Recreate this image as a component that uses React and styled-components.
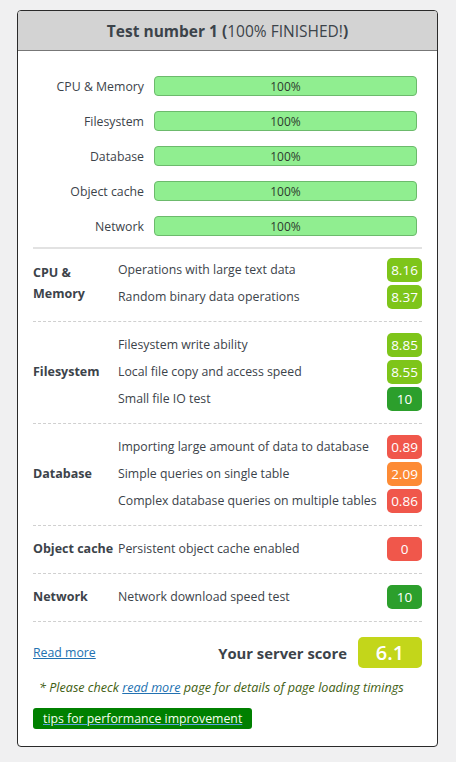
import styled, { createGlobalStyle } from "styled-components";

const GlobalStyle = createGlobalStyle`
  body {
    margin: 0;
    background: #f0f0f1;
    font-family: "Open Sans", "Noto Sans", sans-serif;
    color: #3c434a;
  }
`;

const Page = styled.div`
  padding: 10px 18px 15px 17px;
`;

const Card = styled.div`
  background: #fff;
  border: 1px solid #2a2a2a;
  border-radius: 4px;
  overflow: hidden;
`;

const Header = styled.div`
  background: #d3d3d3;
  border-bottom: 1px solid #777;
  height: 39px;
  display: flex;
  align-items: center;
  justify-content: center;
  font-size: 15.5px;
  font-weight: 700;
  color: #3c434a;

  & span {
    font-weight: 400;
  }
`;

const Body = styled.div`
  padding: 0 15px 17px;
`;

const Progress = styled.div`
  display: flex;
  flex-direction: column;
  gap: 15px;
  padding: 25px 5px 11px 0;
  border-bottom: 2px solid #e2e2e2;
`;

const ProgressRow = styled.div`
  display: grid;
  grid-template-columns: 111px 1fr;
  column-gap: 10px;
  align-items: center;
  font-size: 12.3px;
`;

const ProgressLabel = styled.div`
  text-align: right;
`;

const Bar = styled.div`
  height: 18px;
  background: #90ee90;
  border: 1px solid #6cba6c;
  border-radius: 4px;
  display: flex;
  align-items: center;
  justify-content: center;
  font-size: 12px;
  color: #2e3a2e;
`;

const Section = styled.div`
  display: grid;
  grid-template-columns: 85px 1fr;
  align-items: center;
  padding: ${(p) => (p.first ? "7px 0 11px" : "9px 0 11px")};
  border-bottom: 1px dashed #d0d0d0;
`;

const Category = styled.div`
  font-weight: 700;
  font-size: 12.5px;
  line-height: 21px;
  color: #3c434a;
`;

const Tests = styled.div`
  display: flex;
  flex-direction: column;
`;

const TestRow = styled.div`
  display: flex;
  align-items: center;
  justify-content: space-between;
  height: 27px;
  font-size: 12.3px;
`;

const Badge = styled.div`
  width: 35px;
  height: 24px;
  border-radius: 5px;
  background: ${(p) => p.color};
  color: #fff;
  font-size: 13.5px;
  display: flex;
  align-items: center;
  justify-content: center;
`;

const ScoreRow = styled.div`
  display: flex;
  align-items: center;
  justify-content: space-between;
  padding-top: 15px;
`;

const Link = styled.a`
  color: #2271b1;
  text-decoration: underline;
  font-size: 12.3px;
  cursor: pointer;
`;

const Score = styled.div`
  display: flex;
  align-items: center;
  gap: 11px;
  font-size: 14.8px;
  font-weight: 700;
  color: #3c434a;
`;

const ScoreBadge = styled.div`
  width: 64px;
  height: 31px;
  border-radius: 5px;
  background: #c3d61a;
  color: #fff;
  font-size: 20px;
  font-weight: 600;
  display: flex;
  align-items: center;
  justify-content: center;
`;

const Note = styled.p`
  margin: 11px 0 0 6px;
  font-size: 12.6px;
  font-style: italic;
  color: #3f5e12;

  & a {
    color: #2271b1;
    text-decoration: underline;
  }
`;

const Tips = styled.a`
  display: inline-block;
  margin-top: 12px;
  background: #008000;
  color: #f4fff0;
  text-decoration: underline;
  text-decoration-color: #5aa0e0;
  font-size: 12.3px;
  line-height: 21px;
  padding: 0 10px;
  border-radius: 3px;
`;

const progress = ["CPU & Memory", "Filesystem", "Database", "Object cache", "Network"];

const colors = {
  lime: "#7ec51a",
  green: "#2c9f2c",
  red: "#f0574b",
  orange: "#fd8b35",
};

const sections = [
  {
    name: <>CPU &amp;<br />Memory</>,
    tests: [
      ["Operations with large text data", "8.16", "lime"],
      ["Random binary data operations", "8.37", "lime"],
    ],
  },
  {
    name: "Filesystem",
    tests: [
      ["Filesystem write ability", "8.85", "lime"],
      ["Local file copy and access speed", "8.55", "lime"],
      ["Small file IO test", "10", "green"],
    ],
  },
  {
    name: "Database",
    tests: [
      ["Importing large amount of data to database", "0.89", "red"],
      ["Simple queries on single table", "2.09", "orange"],
      ["Complex database queries on multiple tables", "0.86", "red"],
    ],
  },
  {
    name: "Object cache",
    tests: [["Persistent object cache enabled", "0", "red"]],
  },
  {
    name: "Network",
    tests: [["Network download speed test", "10", "green"]],
  },
];

export default function App() {
  return (
    <>
      <GlobalStyle />
      <Page>
        <Card>
          <Header>
            Test number 1&nbsp;(<span>100% FINISHED!</span>)
          </Header>
          <Body>
            <Progress>
              {progress.map((p) => (
                <ProgressRow key={p}>
                  <ProgressLabel>{p}</ProgressLabel>
                  <Bar>100%</Bar>
                </ProgressRow>
              ))}
            </Progress>
            {sections.map((s, i) => (
              <Section key={i} first={i === 0}>
                <Category>{s.name}</Category>
                <Tests>
                  {s.tests.map(([t, v, c]) => (
                    <TestRow key={t}>
                      {t}
                      <Badge color={colors[c]}>{v}</Badge>
                    </TestRow>
                  ))}
                </Tests>
              </Section>
            ))}
            <ScoreRow>
              <Link>Read more</Link>
              <Score>
                Your server score
                <ScoreBadge>6.1</ScoreBadge>
              </Score>
            </ScoreRow>
            <Note>
              * Please check <a>read more</a> page for details of page loading timings
            </Note>
            <Tips>tips for performance improvement</Tips>
          </Body>
        </Card>
      </Page>
    </>
  );
}
